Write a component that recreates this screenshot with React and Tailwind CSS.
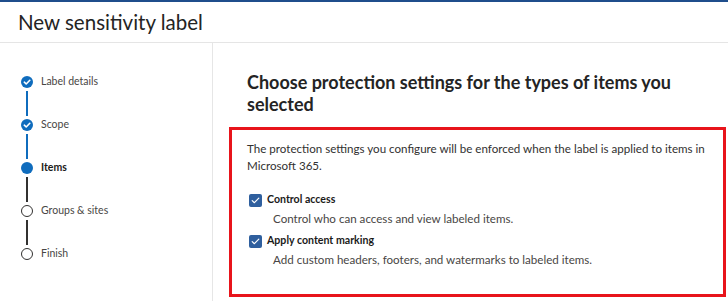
import React from "react";

const steps = [
  { label: "Label details", state: "done" },
  { label: "Scope", state: "done" },
  { label: "Items", state: "current" },
  { label: "Groups & sites", state: "todo" },
  { label: "Finish", state: "todo" },
];

const StepDot = ({ state }) => {
  if (state === "done") {
    return (
      <svg width="12" height="12" viewBox="0 0 12 12" className="shrink-0">
        <circle cx="6" cy="6" r="6" fill="#0f6cbd" />
        <path d="M3.3 6.2 L5.2 8 L8.8 4.3" fill="none" stroke="#fff" strokeWidth="1.6" strokeLinecap="round" strokeLinejoin="round" />
      </svg>
    );
  }
  if (state === "current") {
    return <div className="w-[12px] h-[12px] shrink-0 rounded-full bg-[#0f6cbd]" />;
  }
  return <div className="w-[12px] h-[12px] shrink-0 rounded-full border-[1.5px] border-[#323130] bg-white" />;
};

const Check = () => (
  <div className="w-[13px] h-[13px] shrink-0 rounded-[2px] bg-[#2f5f9e] flex items-center justify-center">
    <svg width="9" height="9" viewBox="0 0 9 9">
      <path d="M1.2 4.6 L3.4 6.7 L7.8 2.2" fill="none" stroke="#fff" strokeWidth="1.2" strokeLinecap="round" strokeLinejoin="round" />
    </svg>
  </div>
);

const Option = ({ title, desc }) => (
  <div>
    <div className="flex items-center h-[18px] pl-[2px]">
      <Check />
      <span className="ml-[5px] text-[10.6px] font-bold text-[#1b1a19]">{title}</span>
    </div>
    <p className="mt-[1px] pl-[26px] text-[11.6px] leading-[17px] text-[#484644]">{desc}</p>
  </div>
);

export default function App() {
  return (
    <div className="w-[728px] h-[301px] bg-white overflow-hidden flex flex-col font-['Lato','Noto_Sans',sans-serif]">
      <div className="h-[43px] shrink-0 border-t-2 border-[#1f4e8c] border-b border-b-[#e5e5e5] flex items-center pl-[18px]">
        <h1 className="text-[20.5px] text-[#242424] leading-none">New sensitivity label</h1>
      </div>

      <div className="flex flex-1">
        <div className="w-[213px] shrink-0 border-r border-[#e6e6e6] pl-[21px] pt-[33px] flex flex-col">
          {steps.map((s, i) => (
            <div key={s.label}>
              <div className="flex items-center h-[12px]">
                <StepDot state={s.state} />
                <span
                  className={
                    s.state === "current"
                      ? "ml-[8px] text-[10.5px] font-bold text-[#1b1a19]"
                      : "ml-[8px] text-[10.5px] text-[#484644]"
                  }
                >
                  {s.label}
                </span>
              </div>
              {i < steps.length - 1 && (
                <div
                  className={
                    i < 2
                      ? "w-[2px] h-[25px] my-[3px] ml-[5px] bg-[#0f6cbd]"
                      : "w-[2px] h-[25px] my-[3px] ml-[5px] bg-[#323130]"
                  }
                />
              )}
            </div>
          ))}
        </div>

        <div className="flex-1 pl-[16px] pr-[2px] pt-[28px]">
          <h2 className="pl-[18px] text-[18px] leading-[22px] font-bold text-[#242424] w-[470px]">
            Choose protection settings for the types of items you selected
          </h2>
          <div className="mt-[12px] h-[170px] border-[3px] border-[#e8141b] pl-[15px] pr-[10px] pt-[10px]">
            <p className="text-[11.6px] leading-[17px] text-[#323130]">
              The protection settings you configure will be enforced when the label is applied to items in
              Microsoft 365.
            </p>
            <div className="mt-[17px] flex flex-col gap-[5px]">
              <Option title="Control access" desc="Control who can access and view labeled items." />
              <Option title="Apply content marking" desc="Add custom headers, footers, and watermarks to labeled items." />
            </div>
          </div>
        </div>
      </div>
    </div>
  );
}
